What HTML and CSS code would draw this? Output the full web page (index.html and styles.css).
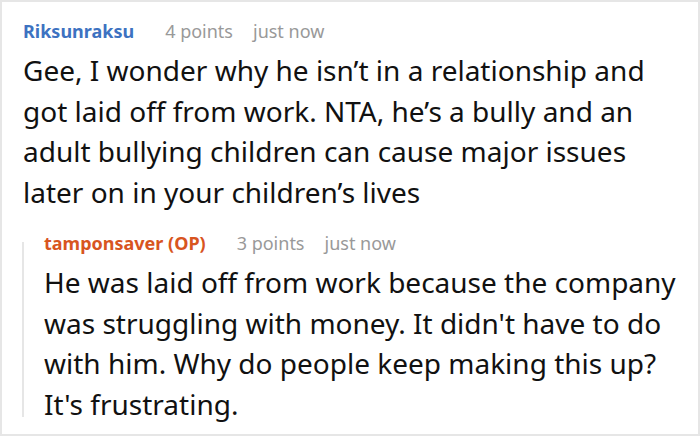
FILE: index.html
```html
<!DOCTYPE html>
<html lang="en">
<head>
<meta charset="utf-8">
<link rel="stylesheet" href="styles.css">
</head>
<body>
<div class="thread">
  <div class="comment">
    <div class="meta">
      <span class="author">Riksunraksu</span>
      <span class="points">4 points</span>
      <span class="time">just now</span>
    </div>
    <p class="text">Gee, I wonder why he isn’t in a relationship and got laid off from work. NTA, he’s a bully and an adult bullying children can cause major issues later on in your children’s lives</p>
    <div class="reply">
      <div class="meta">
        <span class="author op">tamponsaver (OP)</span>
        <span class="points">3 points</span>
        <span class="time">just now</span>
      </div>
      <p class="text">He was laid off from work because the company was struggling with money. It didn't have to do with him. Why do people keep making this up? It's frustrating.</p>
    </div>
  </div>
</div>
</body>
</html>
```
FILE: styles.css
```css
html, body {
  margin: 0;
  padding: 0;
  background: #fff;
}
.thread {
  box-sizing: border-box;
  width: 700px;
  height: 436px;
  border: 2px solid #e6e6e6;
  font-family: "Noto Sans", "Open Sans", sans-serif;
  color: #111;
  overflow: hidden;
}
.comment {
  padding: 16px 18px 0 21px;
}
.meta {
  display: flex;
  font-size: 18px;
  line-height: 27px;
  color: #999;
}
.author {
  font-weight: 700;
  color: #3d72c1;
  margin-right: 31px;
}
.author.op {
  color: #d8551f;
}
.points {
  margin-right: 20px;
}
.text {
  margin: 5px 0 0;
  font-size: 28px;
  line-height: 40.5px;
}
.reply {
  position: relative;
  margin: 18px 0 0 0;
  padding-left: 21px;
}
.reply::before {
  content: "";
  position: absolute;
  left: -1px;
  top: 12px;
  bottom: 7px;
  width: 2px;
  background: #e6e6e6;
}
```
